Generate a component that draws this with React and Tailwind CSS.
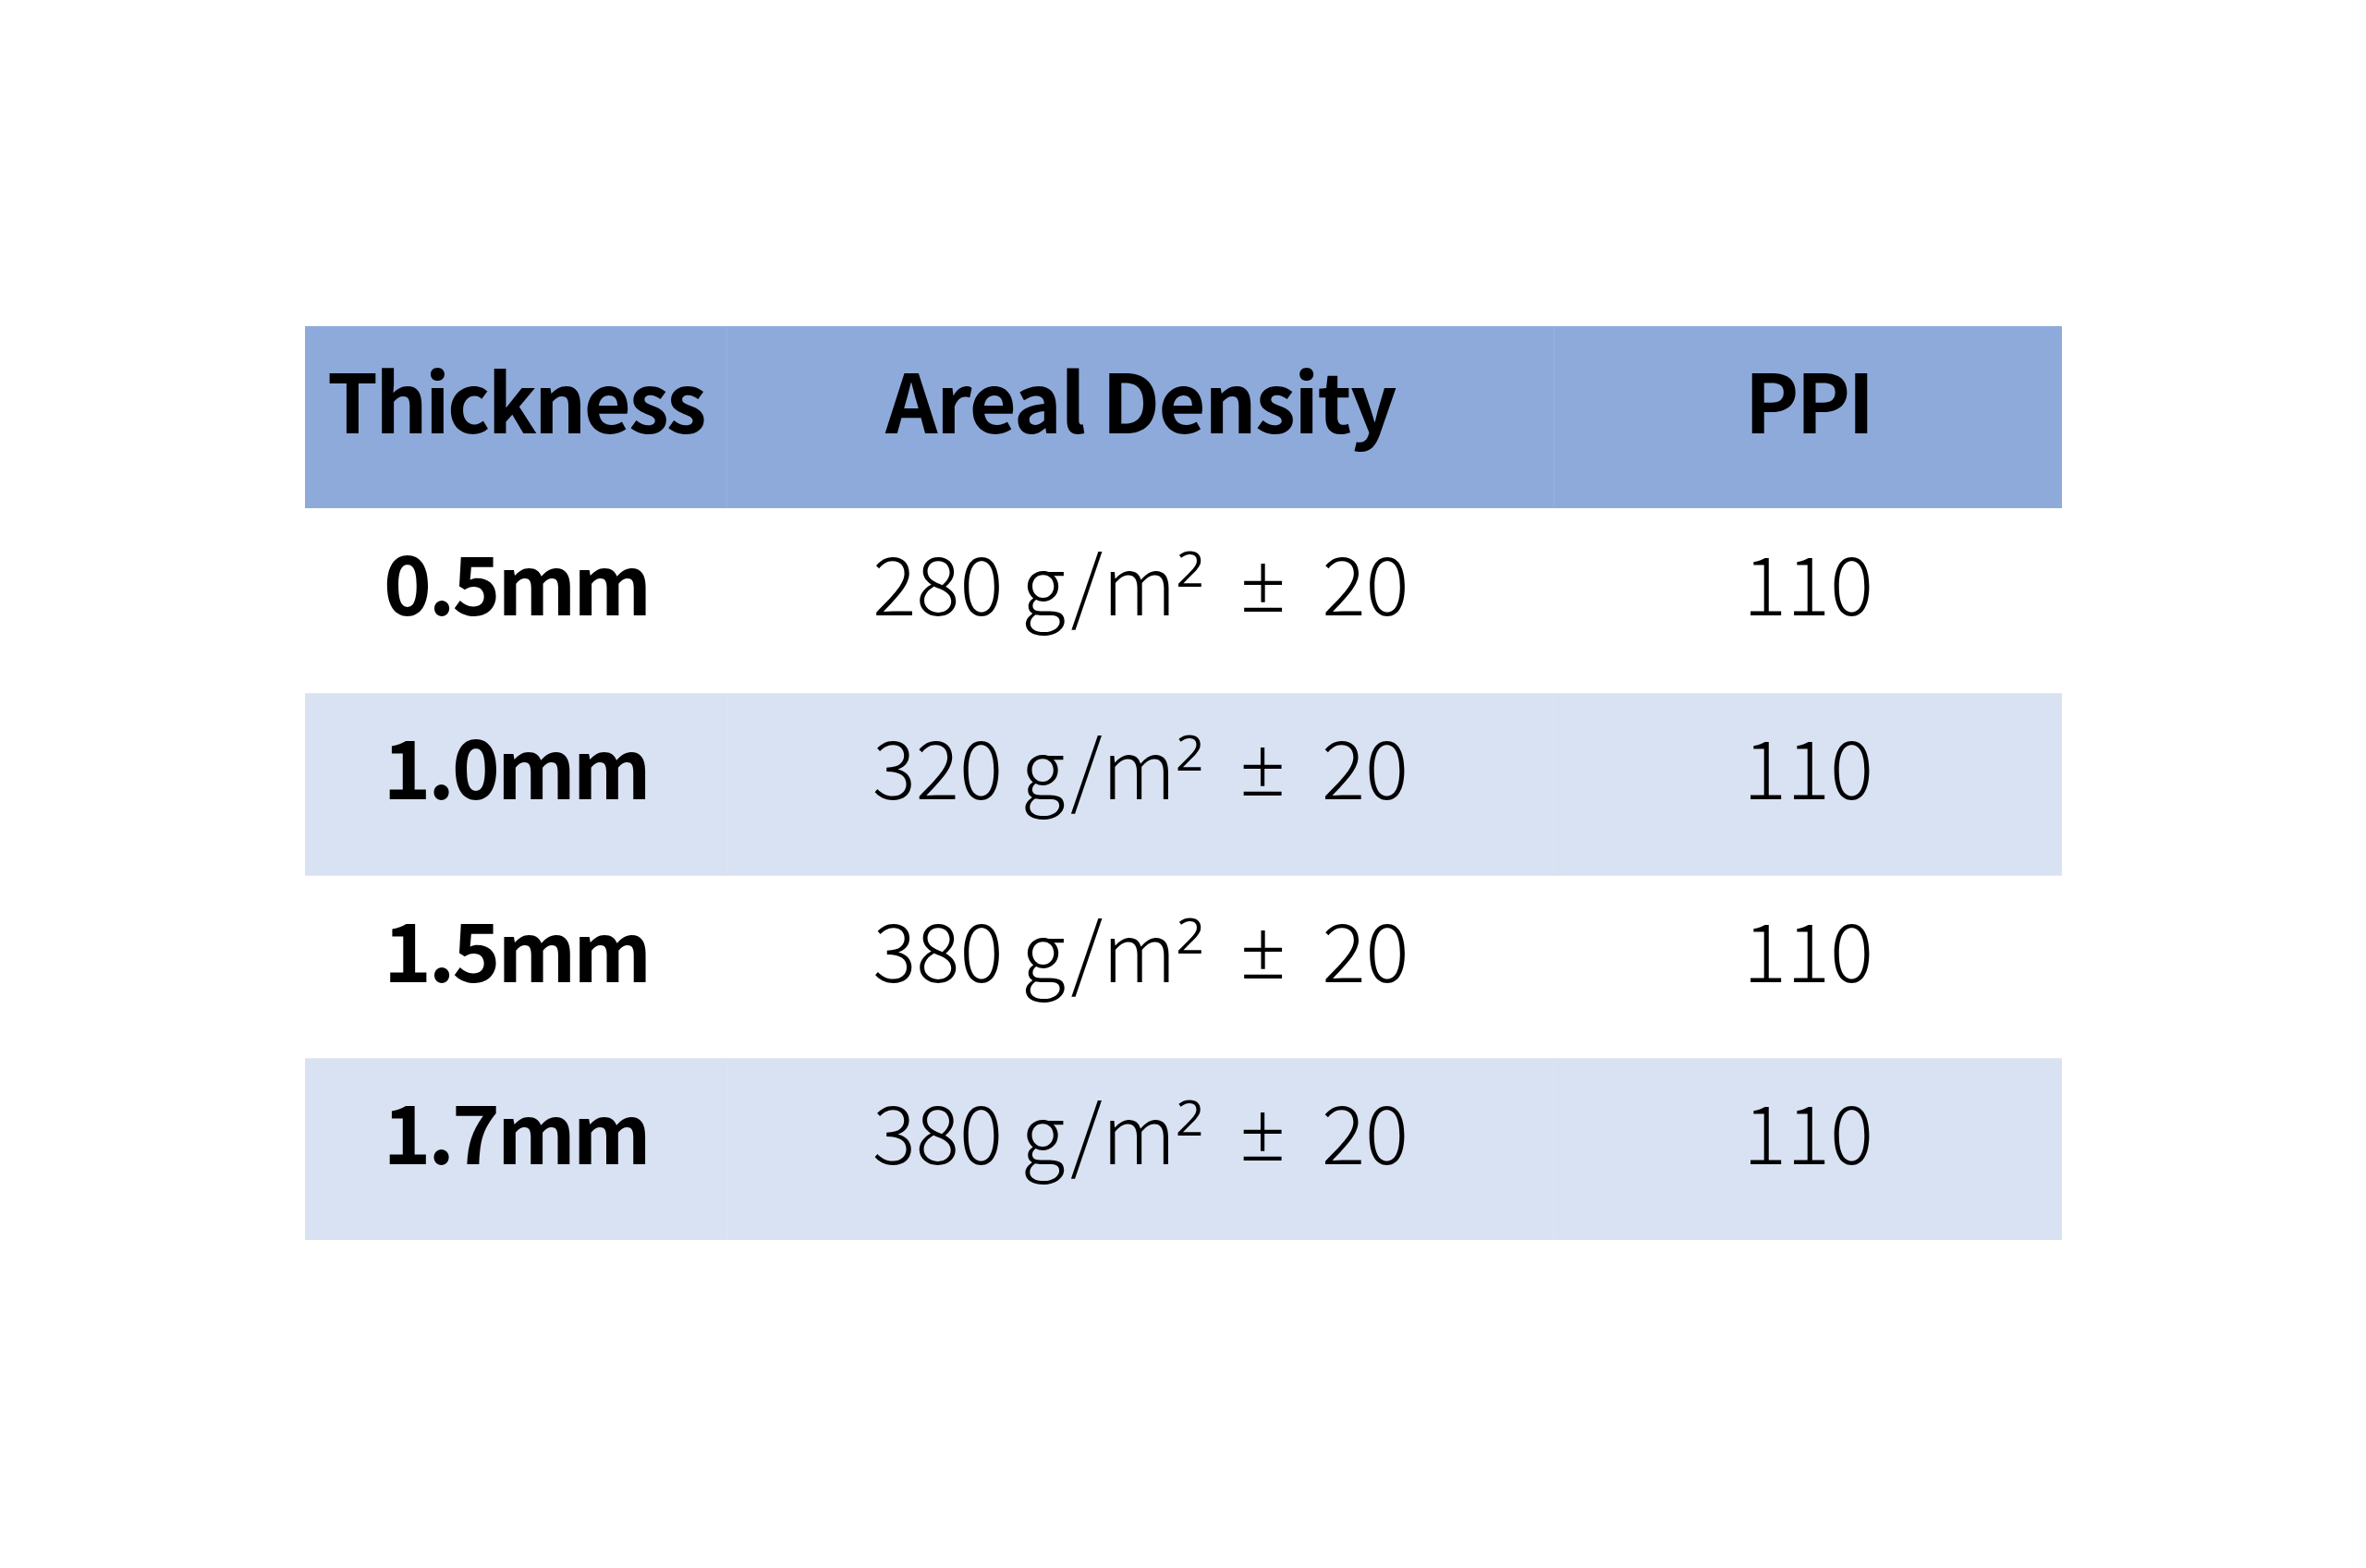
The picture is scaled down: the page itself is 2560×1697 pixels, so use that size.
export default function App() {
  const rows = [
    { t: "0.5mm", d: "280", p: "110", bg: "bg-white", h: "h-[200px]" },
    { t: "1.0mm", d: "320", p: "110", bg: "bg-[#d9e2f3]", h: "h-[197px]" },
    { t: "1.5mm", d: "380", p: "110", bg: "bg-white", h: "h-[198px]" },
    { t: "1.7mm", d: "380", p: "110", bg: "bg-[#d9e2f3]", h: "h-[197px]" },
  ];
  const font = { fontFamily: '"Noto Sans CJK SC", "Noto Sans", sans-serif' };
  const latin = { fontFamily: '"Noto Sans", "Noto Sans CJK SC", sans-serif' };
  return (
    <div className="w-full h-[1697px] bg-white pt-[353px] pl-[330px]" style={font}>
      <div className="w-[1901px] flex flex-col">
        <div className="flex h-[197px] bg-[#8eaadb] text-black">
          <div className="w-[457px] flex items-center justify-center pb-[42px] text-[88px] font-bold tracking-[-2.7px] border-r border-[#97b1de]">Thickness</div>
          <div className="w-[895px] flex items-center justify-center pb-[42px] text-[88px] font-bold tracking-[-1.5px] border-r border-[#97b1de]">Areal Density</div>
          <div className="flex-1 flex items-center justify-center pb-[42px] text-[88px] font-bold tracking-[-3px]">PPI</div>
        </div>
        {rows.map((r, i) => (
          <div key={i} className={`flex ${r.h} ${r.bg} text-black ${i === 0 ? "" : "border-t border-[#e3e9f4]"}`}>
            <div className={`w-[457px] flex items-center justify-center pb-[44px] text-[88px] font-bold tracking-[-3px] ${i % 2 ? "border-r border-[#dde5f3]" : ""}`}>{r.t}</div>
            <div className={`w-[895px] flex items-center justify-center pb-[44px] text-[88px] font-light whitespace-pre ${i % 2 ? "border-r border-[#dde5f3]" : ""}`}>
              <span>{r.d} g/m</span>
              <span style={latin} className="font-light inline-block translate-y-[10px]">²</span>
              <span>{"  "}</span>
              <span style={latin} className="font-light">±</span>
              <span>{"  "}</span>
              <span>20</span>
            </div>
            <div className="flex-1 flex items-center justify-center pb-[44px] text-[88px] font-light">{r.p}</div>
          </div>
        ))}
      </div>
    </div>
  );
}
